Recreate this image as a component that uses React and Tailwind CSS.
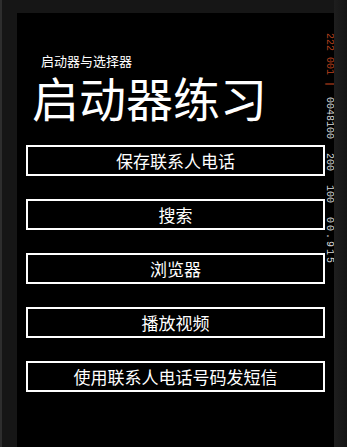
const buttons = ["保存联系人电话", "搜索", "浏览器", "播放视频", "使用联系人电话号码发短信"];

const App = () => {
  return (
    <div
      className="relative h-[447px] w-[347px] border-l-2 border-[#2e2e2e] bg-[#161616] pl-[15px] pr-[13px] pt-[13px]"
      style={{ fontFamily: '"Noto Sans CJK SC", "Noto Sans", sans-serif' }}
    >
      <div className="relative flex h-full flex-col bg-black">
        <p className="ml-[24px] mt-[41px] text-[13px] leading-none text-white">启动器与选择器</p>
        <h1 className="ml-[15px] mt-[6px] text-[47px] leading-none text-white">启动器练习</h1>

        <div className="mt-[25px] flex flex-col gap-[23px] pl-[9px] pr-[9px]">
          {buttons.map((label) => (
            <button
              key={label}
              className="flex h-[31px] w-full items-center justify-center border-2 border-white bg-black text-[17px] leading-none text-white"
            >
              {label}
            </button>
          ))}
        </div>

        {/* frame rate counters */}
        <div
          className="absolute right-0 top-[20px] text-[10px] leading-none [writing-mode:vertical-rl]"
          style={{ fontFamily: '"Liberation Mono", monospace' }}
        >
          <span className="text-[#b8401e]">222 001 |</span>
          <span className="mt-[10px] inline-block text-[#d8d8d8]">0048100</span>
          <span className="mt-[14px] inline-block text-[#d8d8d8]">200</span>
          <span className="mt-[14px] inline-block text-[#d8d8d8]">100</span>
          <span className="mt-[14px] inline-block tracking-[2px] text-[#d8d8d8]">00.915</span>
        </div>
      </div>
      <div className="absolute right-0 top-0 h-full w-[13px] bg-gradient-to-r from-[#1e1e1e] to-[#141414]" />
    </div>
  );
};

export default App;
